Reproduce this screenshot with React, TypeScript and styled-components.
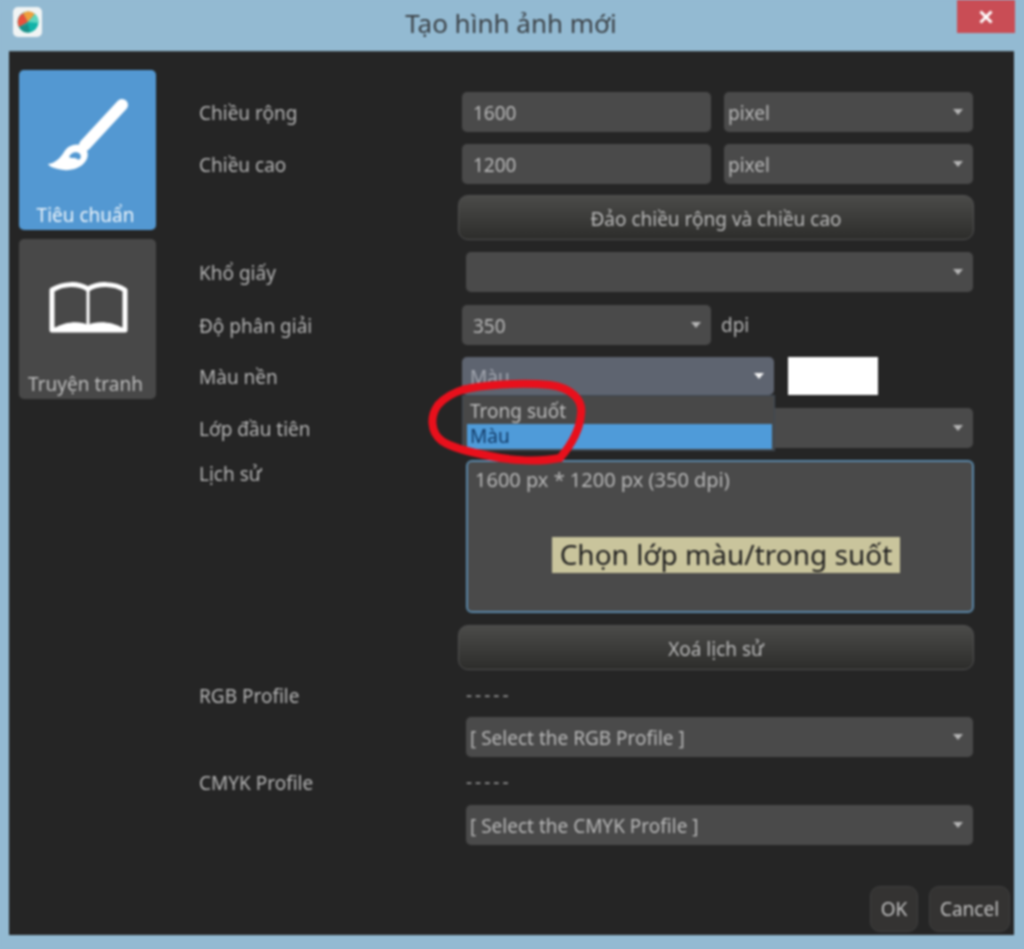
import React from "react";
import styled, { createGlobalStyle } from "styled-components";

const Global = createGlobalStyle`
  html, body { margin: 0; padding: 0; background: #93bad2; }
  * { box-sizing: border-box; }
`;

const Win = styled.div`
  position: relative;
  width: 1024px;
  height: 949px;
  overflow: hidden;
  background: #93bad2;
  font-family: "Noto Sans", "Open Sans", sans-serif;
  font-size: 19px;
  color: #b9b9b9;
  filter: blur(0.8px);
`;

const TitleBar = styled.header`
  height: 51px;
  display: grid;
  grid-template-columns: 1fr auto 1fr;
  align-items: start;
  padding: 0 15px 0 13px;
`;

const AppIcon = styled.div`
  width: 29px;
  height: 30px;
  margin-top: 7px;
  border-radius: 5px;
  background: #f1f4f4;
  display: flex;
  align-items: center;
  justify-content: center;
`;

const Title = styled.h1`
  margin: 0;
  padding-top: 5px;
  font-size: 26px;
  font-weight: 400;
  line-height: 36px;
  color: #3c4247;
`;

const Close = styled.div`
  justify-self: end;
  width: 58px;
  height: 33px;
  margin-right: -6px;
  background: #c94d55;
  color: #fff;
  display: flex;
  align-items: center;
  justify-content: center;
`;

const Panel = styled.main`
  margin-left: 9px;
  width: 1005px;
  height: 884px;
  background: #252525;
  display: flex;
  border-top: 1px solid #3d4346;
`;

const Side = styled.nav`
  width: 190px;
  flex: none;
  padding: 18px 0 0 10px;
  display: flex;
  flex-direction: column;
  gap: 9px;
`;

const Tile = styled.div<{ $active?: boolean }>`
  width: 137px;
  height: 160px;
  border-radius: 5px;
  background: ${(p) => (p.$active ? "#5398d2" : "#484848")};
  color: ${(p) => (p.$active ? "#eef5fb" : "#bdbdbd")};
  display: flex;
  flex-direction: column;
  align-items: center;
`;

const TileIcon = styled.div`
  height: 132px;
  display: flex;
  align-items: center;
  justify-content: center;
`;

const TileText = styled.span`
  line-height: 26px;
  margin-right: 4px;
  white-space: nowrap;
`;

const Form = styled.section`
  width: 815px;
  padding-top: 40px;
  display: flex;
  flex-direction: column;
`;

const Row = styled.div<{ $h: number; $top?: number }>`
  height: ${(p) => p.$h}px;
  margin-top: ${(p) => p.$top ?? 12}px;
  display: grid;
  grid-template-columns: 263px 1fr;
  align-items: center;
  &:first-child { margin-top: 0; }
`;

const Label = styled.label<{ $top?: boolean }>`
  white-space: nowrap;
  color: #b4b4b4;
  line-height: 24px;
  padding-top: 2px;
  align-self: ${(p) => (p.$top ? "start" : "center")};
`;

const Fields = styled.div<{ $indent?: number }>`
  height: 100%;
  margin-left: ${(p) => p.$indent ?? 0}px;
  width: ${(p) => 511 - (p.$indent ?? 0)}px;
  display: flex;
  align-items: center;
  gap: 13px;
`;

const Field = styled.div<{ $w?: number; $focus?: boolean; $pad?: number }>`
  position: relative;
  flex: ${(p) => (p.$w ? "none" : "1")};
  width: ${(p) => (p.$w ? `${p.$w}px` : "auto")};
  height: 100%;
  border-radius: 5px;
  background: ${(p) => (p.$focus ? "#5e6470" : "#4a4a4a")};
  color: ${(p) => (p.$focus ? "#a3a7b0" : "#b8b8b8")};
  padding: 2px 30px 0 ${(p) => p.$pad ?? 11}px;
  display: flex;
  align-items: center;
  white-space: nowrap;
`;

const SelectField = styled(Field)`
  padding-left: ${(p) => p.$pad ?? 4}px;
  &::after {
    content: "";
    position: absolute;
    right: 10px;
    top: 50%;
    margin-top: -3px;
    border-left: 5px solid transparent;
    border-right: 5px solid transparent;
    border-top: 6px solid ${(p) => (p.$focus ? "#f4f4f4" : "#b4b4b4")};
  }
`;

const Popup = styled.ul`
  position: absolute;
  left: 0;
  top: 100%;
  width: 313px;
  height: 56px;
  margin: 0;
  padding: 3px 2px 3px 4px;
  list-style: none;
  background: #484848;
  border: 1px solid #3d4854;
  z-index: 2;
`;

const Option = styled.li<{ $sel?: boolean }>`
  height: 25px;
  line-height: 24px;
  padding-left: 3px;
  font-size: 19px;
  background: ${(p) => (p.$sel ? "#4f9bd9" : "transparent")};
  color: ${(p) => (p.$sel ? "#123a66" : "#bdbdbd")};
`;

const Swatch = styled.div`
  width: 90px;
  height: 38px;
  background: #fff;
  margin-left: 1px;
`;

const Unit = styled.span`
  margin-left: -3px;
  color: #b4b4b4;
`;

const Button = styled.div`
  height: 100%;
  margin-left: -4px;
  width: 516px;
  border-radius: 10px;
  border: 1px solid #505050;
  background: linear-gradient(#4b4b49, #2d2d2b);
  color: #b9b9b9;
  padding-top: 2px;
  display: flex;
  align-items: center;
  justify-content: center;
`;

const History = styled.div`
  position: relative;
  height: 100%;
  margin-left: 4px;
  width: 508px;
  border: 2px solid #5a87a8;
  border-radius: 6px;
  background: #4a4a4a;
  padding: 5px 7px;
  font-size: 20px;
  line-height: 26px;
  color: #b8b8b8;
`;

const Tip = styled.div`
  position: absolute;
  left: 84px;
  top: 75px;
  width: 348px;
  height: 36px;
  background: #c9c49c;
  color: #1f1f1f;
  font-size: 28px;
  line-height: 34px;
  text-align: center;
  white-space: nowrap;
`;

const Dashes = styled.span`
  margin-left: 4px;
  letter-spacing: 3px;
  color: #9a9a9a;
  line-height: 24px;
`;

const Footer = styled.footer`
  margin-top: 41px;
  display: flex;
  justify-content: flex-end;
  gap: 11px;
  padding-right: 4px;
`;

const FootBtn = styled.div<{ $w: number }>`
  width: ${(p) => p.$w}px;
  height: 46px;
  border-radius: 10px;
  border: 1px solid #3f3f3f;
  background: #343332;
  color: #c2c2c2;
  display: flex;
  align-items: center;
  justify-content: center;
`;

const Annotation = styled.svg`
  position: absolute;
  left: 0;
  top: 0;
  pointer-events: none;
  z-index: 3;
`;

function Ball() {
  return (
    <svg width="24" height="24" viewBox="0 0 24 24">
      <circle cx="12" cy="12" r="10.5" fill="#12b3a8" />
      <path d="M12 12 L3 17 A10.5 10.5 0 0 1 7 3 Z" fill="#e8513c" />
      <path d="M12 12 L7 3 A10.5 10.5 0 0 1 19 4 Z" fill="#f0a03c" />
      <path d="M12 12 L19 4 A10.5 10.5 0 0 1 22.5 13 Z" fill="#5fd6c0" />
      <path d="M3 17 A10.5 10.5 0 0 0 14 22.3 L12 14 Z" fill="#1a8f88" />
    </svg>
  );
}

function Brush() {
  return (
    <svg width="110" height="100" viewBox="3 1 110 100">
      <path d="M92 20 L55 60" stroke="#fff" strokeWidth="12" strokeLinecap="round" />
      <path
        d="M18 79 C26 78 31 72 34 67 C37 61 45 58 51 60 C58 63 60 71 55 77 C50 84 38 87 28 84 C23 83 19 81 18 79 Z"
        fill="#fff"
      />
      <path d="M39 72 C41 67 47 66 50 69 C52 72 50 76 47 74 C45 72 42 74 39 72 Z" fill="#5398d2" />
    </svg>
  );
}

function Book() {
  return (
    <svg width="110" height="80" viewBox="3 0 110 80">
      <path
        d="M22 25 C34 18 48 18 58 24 C68 18 84 18 95 25 V65 H22 Z"
        fill="none"
        stroke="#fff"
        strokeWidth="5"
        strokeLinejoin="round"
      />
      <path d="M58 24 V60" stroke="#fff" strokeWidth="3" />
      <path d="M23 64 C36 56 50 56 58 60 C66 56 82 56 94 64 V67 H23 Z" fill="#fff" />
    </svg>
  );
}

export default function App() {
  return (
    <Win>
      <Global />
      <TitleBar>
        <AppIcon><Ball /></AppIcon>
        <Title>Tạo hình ảnh mới</Title>
        <Close>
          <svg width="16" height="16" viewBox="0 0 16 16">
            <path d="M2.5 2.5 L13.5 13.5 M13.5 2.5 L2.5 13.5" stroke="#fff" strokeWidth="3" />
          </svg>
        </Close>
      </TitleBar>
      <Panel>
        <Side>
          <Tile $active>
            <TileIcon><Brush /></TileIcon>
            <TileText>Tiêu chuẩn</TileText>
          </Tile>
          <Tile>
            <TileIcon><Book /></TileIcon>
            <TileText>Truyện tranh</TileText>
          </Tile>
        </Side>
        <Form>
          <Row $h={40}>
            <Label>Chiều rộng</Label>
            <Fields>
              <Field $w={249}>1600</Field>
              <SelectField>pixel</SelectField>
            </Fields>
          </Row>
          <Row $h={40}>
            <Label>Chiều cao</Label>
            <Fields>
              <Field $w={249}>1200</Field>
              <SelectField>pixel</SelectField>
            </Fields>
          </Row>
          <Row $h={45} $top={11}>
            <span />
            <Button>Đảo chiều rộng và chiều cao</Button>
          </Row>
          <Row $h={40}>
            <Label>Khổ giấy</Label>
            <Fields $indent={4}><SelectField /></Fields>
          </Row>
          <Row $h={40} $top={13}>
            <Label>Độ phân giải</Label>
            <Fields>
              <SelectField $w={249} $pad={11}>350</SelectField>
              <Unit>dpi</Unit>
            </Fields>
          </Row>
          <Row $h={38}>
            <Label>Màu nền</Label>
            <Fields>
              <SelectField $w={312} $focus $pad={8}>
                Màu
                <Popup>
                  <Option>Trong suốt</Option>
                  <Option $sel>Màu</Option>
                </Popup>
              </SelectField>
              <Swatch />
            </Fields>
          </Row>
          <Row $h={40} $top={13}>
            <Label>Lớp đầu tiên</Label>
            <Fields $indent={4}><SelectField /></Fields>
          </Row>
          <Row $h={153}>
            <Label $top>Lịch sử</Label>
            <History>
              1600 px * 1200 px (350 dpi)
              <Tip>Chọn lớp màu/trong suốt</Tip>
            </History>
          </Row>
          <Row $h={45}>
            <span />
            <Button>Xoá lịch sử</Button>
          </Row>
          <Row $h={24} $top={12}>
            <Label>RGB Profile</Label>
            <Dashes>-----</Dashes>
          </Row>
          <Row $h={40} $top={11}>
            <span />
            <Fields $indent={4}><SelectField>[ Select the RGB Profile ]</SelectField></Fields>
          </Row>
          <Row $h={24} $top={12}>
            <Label>CMYK Profile</Label>
            <Dashes>-----</Dashes>
          </Row>
          <Row $h={40} $top={12}>
            <span />
            <Fields $indent={4}><SelectField>[ Select the CMYK Profile ]</SelectField></Fields>
          </Row>
          <Footer>
            <FootBtn $w={48}>OK</FootBtn>
            <FootBtn $w={81}>Cancel</FootBtn>
          </Footer>
        </Form>
      </Panel>
      <Annotation width="1024" height="949" viewBox="0 0 1024 949">
        <path
          d="M463 390 C480 385 520 382 550 385 C572 388 583 400 581 414 C580 428 572 444 560 458 C540 462 512 461 490 456 C470 452 452 448 442 441 C430 432 430 416 438 405 C445 397 455 392 465 389"
          fill="none"
          stroke="#e8101c"
          strokeWidth="8"
          strokeLinecap="round"
        />
      </Annotation>
    </Win>
  );
}
